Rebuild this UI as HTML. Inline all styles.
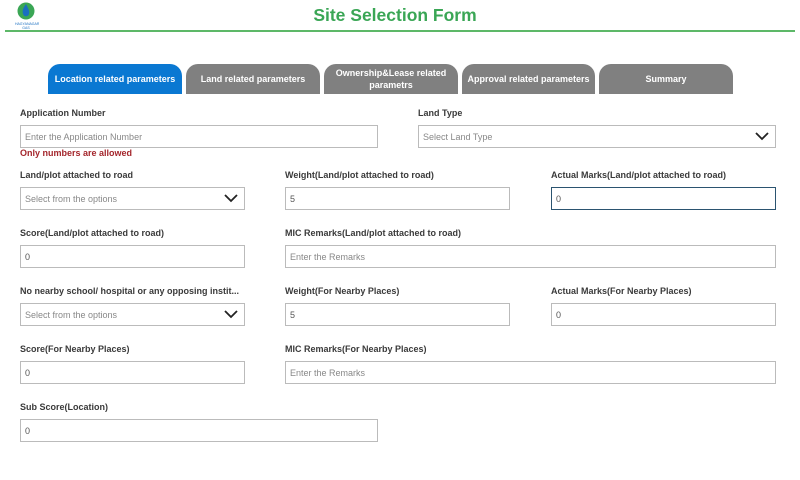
<!DOCTYPE html>
<html><head><meta charset="utf-8"><style>
*{box-sizing:border-box;margin:0;padding:0}
body{width:800px;height:480px;background:#fff;font-family:"Liberation Sans",sans-serif;position:relative;overflow:hidden;color:#333}
.a{position:absolute}
.title{left:0;width:790px;top:5px;text-align:center;font-size:17.5px;font-weight:bold;color:#3aa655}
.line{left:5px;width:790px;top:30px;height:2px;background:#5db868}
.tab{position:absolute;top:64px;height:30px;background:#808080;border-radius:12px 12px 0 0;color:#fff;font-size:9px;font-weight:bold;display:flex;align-items:center;justify-content:center;text-align:center;line-height:12px}
.lbl{position:absolute;font-size:9px;font-weight:bold;color:#3a3a3a}
.inp{position:absolute;height:23px;border:1px solid #bbb;font-size:9px;color:#555;padding-left:4px;display:flex;align-items:center}
.inp.ph{color:#888}
.chev{position:absolute;right:6px;top:6px}
</style></head><body>
<svg class="a" style="left:15px;top:1px" width="24" height="30" viewBox="0 0 24 30">
<circle cx="11" cy="10" r="8.5" fill="#3aa655"/>
<path d="M11 3 C8 7 7 10 8 13 C9 16 13 16 14 13 C15 10 13 7 11 3Z" fill="#1a6fc0"/>
<text x="11" y="24" font-size="3.5" text-anchor="middle" fill="#1a6fc0" font-family="Liberation Sans">BHAGYANAGAR</text>
<text x="11" y="28" font-size="3.5" text-anchor="middle" fill="#1a6fc0" font-family="Liberation Sans">GAS</text>
</svg>
<div class="a title">Site Selection Form</div>
<div class="a line"></div>
<div class="tab" style="left:48px;width:134px;background:#0a78d2">Location related parameters</div>
<div class="tab" style="left:186px;width:134px">Land related parameters</div>
<div class="tab" style="left:324px;width:134px">Ownership&amp;Lease related<br>parametrs</div>
<div class="tab" style="left:462px;width:133px">Approval related parameters</div>
<div class="tab" style="left:599px;width:134px">Summary</div>

<div class="lbl" style="left:20px;top:108px">Application Number</div>
<div class="inp ph" style="left:20px;top:125px;width:358px">Enter the Application Number</div>
<div class="lbl" style="left:20px;top:148px;color:#a4262c">Only numbers are allowed</div>
<div class="lbl" style="left:418px;top:108px">Land Type</div>
<div class="inp ph" style="left:418px;top:125px;width:358px">Select Land Type<svg class="chev" width="14" height="9" viewBox="0 0 14 9"><path d="M1 1 L7 7 L13 1" stroke="#222" stroke-width="1.8" fill="none"/></svg></div>

<div class="lbl" style="left:20px;top:170px">Land/plot attached to road</div>
<div class="inp ph" style="left:20px;top:187px;width:225px">Select from the options<svg class="chev" width="14" height="9" viewBox="0 0 14 9"><path d="M1 1 L7 7 L13 1" stroke="#222" stroke-width="1.8" fill="none"/></svg></div>
<div class="lbl" style="left:285px;top:170px">Weight(Land/plot attached to road)</div>
<div class="inp" style="left:285px;top:187px;width:225px">5</div>
<div class="lbl" style="left:551px;top:170px">Actual Marks(Land/plot attached to road)</div>
<div class="inp" style="left:551px;top:187px;width:225px;border-color:#2b5470">0</div>

<div class="lbl" style="left:20px;top:228px">Score(Land/plot attached to road)</div>
<div class="inp" style="left:20px;top:245px;width:225px">0</div>
<div class="lbl" style="left:285px;top:228px">MIC Remarks(Land/plot attached to road)</div>
<div class="inp ph" style="left:285px;top:245px;width:491px">Enter the Remarks</div>

<div class="lbl" style="left:20px;top:286px">No nearby school/ hospital or any opposing instit...</div>
<div class="inp ph" style="left:20px;top:303px;width:225px">Select from the options<svg class="chev" width="14" height="9" viewBox="0 0 14 9"><path d="M1 1 L7 7 L13 1" stroke="#222" stroke-width="1.8" fill="none"/></svg></div>
<div class="lbl" style="left:285px;top:286px">Weight(For Nearby Places)</div>
<div class="inp" style="left:285px;top:303px;width:225px">5</div>
<div class="lbl" style="left:551px;top:286px">Actual Marks(For Nearby Places)</div>
<div class="inp" style="left:551px;top:303px;width:225px">0</div>

<div class="lbl" style="left:20px;top:344px">Score(For Nearby Places)</div>
<div class="inp" style="left:20px;top:361px;width:225px">0</div>
<div class="lbl" style="left:285px;top:344px">MIC Remarks(For Nearby Places)</div>
<div class="inp ph" style="left:285px;top:361px;width:491px">Enter the Remarks</div>

<div class="lbl" style="left:20px;top:402px">Sub Score(Location)</div>
<div class="inp" style="left:20px;top:419px;width:358px">0</div>
</body></html>
